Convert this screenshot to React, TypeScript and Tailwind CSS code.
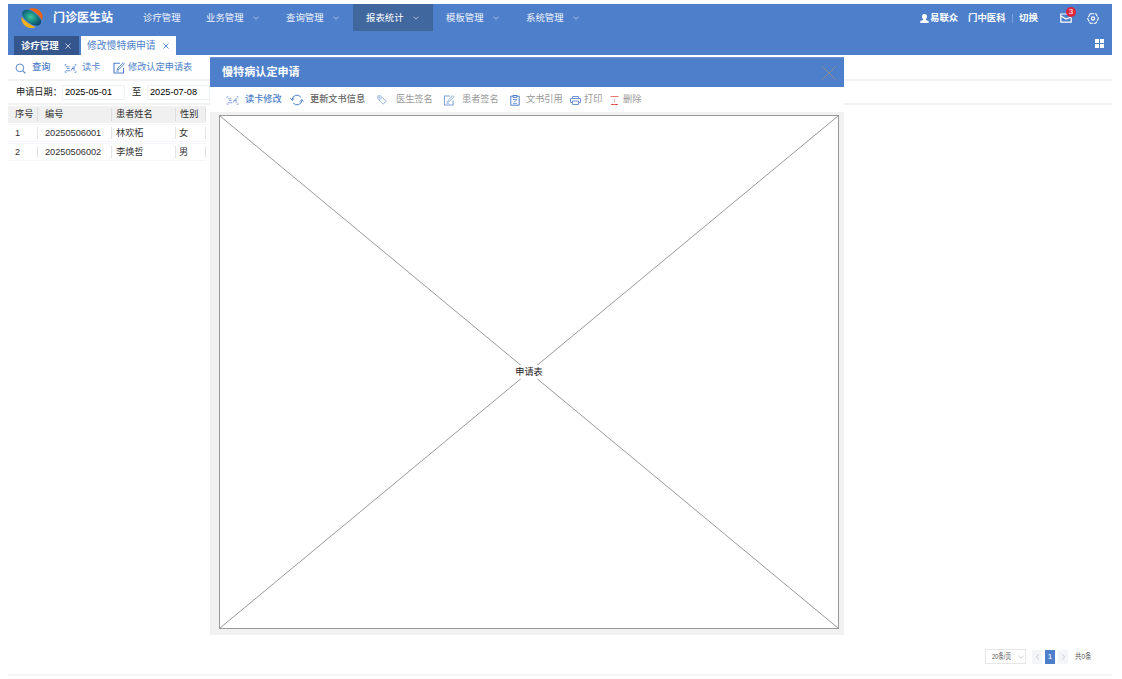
import type { ReactNode } from "react";

const menus = [
  { label: "业务管理" },
  { label: "查询管理" },
  { label: "报表统计", active: true },
  { label: "模板管理" },
  { label: "系统管理" },
];

const patients = [
  { no: "1", code: "20250506001", name: "林欢柘", sex: "女" },
  { no: "2", code: "20250506002", name: "李焕哲", sex: "男" },
];

interface IconProps {
  className?: string;
  children: ReactNode;
  viewBox?: string;
}

const Icon = ({ className = "", children, viewBox = "0 0 12 12" }: IconProps) => (
  <svg
    viewBox={viewBox}
    className={`shrink-0 ${className}`}
    fill="none"
    stroke="currentColor"
    strokeWidth="1"
  >
    {children}
  </svg>
);

const Chevron = ({ className = "" }: { className?: string }) => (
  <Icon className={className} viewBox="0 0 6 4">
    <path d="M0.5 0.7 3 3.2 5.5 0.7" strokeWidth="0.8" />
  </Icon>
);

const Cross = ({ className = "" }: { className?: string }) => (
  <Icon className={className} viewBox="0 0 6 6">
    <path d="M0.5 0.5 5.5 5.5M5.5 0.5 0.5 5.5" strokeWidth="0.9" />
  </Icon>
);

const CardIcon = ({ className = "" }: { className?: string }) => (
  <Icon className={className} viewBox="0 0 13 10">
    <path d="M0.5 2.5V0.5H2M11 0.5h1.5v2M0.5 7.5v2H2M11 9.5h1.5v-2" strokeWidth="0.7" />
    <path d="M1.5 3h4M2.5 5h3M1.5 7.5h4.5M7 7.5l3-4.5M8 5h2.5M10.5 2.5v5" strokeWidth="0.9" />
  </Icon>
);

const EditIcon = ({ className = "" }: { className?: string }) => (
  <Icon className={className}>
    <path d="M7 1.2H1v9.8h9.5V6" strokeWidth="1.1" />
    <path d="M4.3 7.8 5 5.8 10.2 0.7l1.2 1.2L6.2 7.1z" strokeWidth="0.9" />
    <path d="M3 9h3" strokeWidth="0.8" />
  </Icon>
);

const Logo = () => (
  <svg viewBox="0 0 22 20" className="h-[20px] w-[22px] shrink-0">
    <defs>
      <radialGradient id="globe" cx="0.45" cy="0.45" r="0.6">
        <stop offset="0" stopColor="#3fc79c" />
        <stop offset="0.55" stopColor="#168184" />
        <stop offset="1" stopColor="#0c4d70" />
      </radialGradient>
    </defs>
    <path
      d="M1.5 4C4 0.5 9 1.5 14 5.5c4.5 3.5 7.5 7 5.5 10.5-2.5 3-7.5 1.5-12-2C3 10.5 0 7 1.5 4z"
      fill="url(#globe)"
    />
    <path d="M7.5 0.8C13-0.8 19 1 21 6c.8 2 .6 4.500 0 6C18 7 13 3 7.500.8z" fill="#ee6414" />
    <path d="M0.5 9c-.8 5 3 10 8.500 11 2 .2 4 0 5.500-1C9 17 4.500 13.500.5 9z" fill="#f4b01c" />
  </svg>
);

const Header = () => (
  <header className="h-[51px] shrink-0 bg-[#4e7fcb] text-white">
    <div className="flex h-[27px] items-center text-[9.4px] *:pt-px">
      <div className="flex w-[122px] items-center pl-[13px]">
        <Logo />
        <h1 className="ml-[10px] text-[12px] font-bold">门诊医生站</h1>
      </div>
      <div className="w-[63px] pl-[13px] text-[#eef3fb]">诊疗管理</div>
      {menus.map((menu) => (
        <div
          key={menu.label}
          className={`flex h-full w-20 items-center pl-[13px] ${
            menu.active ? "bg-[#41679f] text-white" : "text-[#eef3fb]"
          }`}
        >
          <span className="w-[47px]">{menu.label}</span>
          <Chevron className="h-[4px] w-[6px] text-[#c9d8f0]" />
        </div>
      ))}
      <div className="ml-auto flex h-full items-center pr-[13px] font-bold">
        <svg viewBox="0 0 9 9" className="mr-[1px] h-[9px] w-[9px]" fill="currentColor">
          <path d="M4.5 0a2.4 2.6 0 0 1 1.4 4.8V6L8.7 7v2H.3V7l2.8-1V4.8A2.4 2.6 0 0 1 4.5 0z" />
        </svg>
        <span className="w-[38px]">易联众</span>
        <span className="w-[44px]">门中医科</span>
        <span className="mr-[6px] h-[9px] w-px bg-[#7b9fd8]" />
        <span className="w-[41px]">切换</span>
        <span className="relative mr-[15px]">
          <Icon className="h-[10px] w-[12px]" viewBox="0 0 12 10">
            <path d="M7 1H0.8v8.2h10.4V4.5M1 3l5 3 5-2" strokeWidth="1.2" />
          </Icon>
          <span className="absolute -top-[6px] left-[6px] flex h-[10px] w-[10px] items-center justify-center rounded-full bg-[#e0233c] text-[8px] font-normal">
            3
          </span>
        </span>
        <Icon className="h-[11px] w-[12px]" viewBox="0 0 12 11">
          <path d="M3.2 0.8h5.6l2.6 4.7-2.6 4.7H3.2L0.6 5.5z" strokeWidth="1.1" strokeDasharray="4 0.8" />
          <circle cx="6" cy="5.5" r="1.6" strokeWidth="1.2" />
        </Icon>
      </div>
    </div>
    <div className="flex h-6 items-end pl-[6px]">
      <div className="flex h-[19px] w-[65px] items-center bg-[#34568d] pt-px pl-[7px] text-[9.4px] font-bold">
        <span className="w-[44px]">诊疗管理</span>
        <Cross className="h-[6px] w-[6px] text-[#c3cfe2]" />
      </div>
      <div className="ml-[2px] flex h-[19px] w-[95px] items-center bg-white pt-px pl-[6px] text-[9.8px] text-[#4e7fcb]">
        <span className="w-[76px] whitespace-nowrap">修改慢特病申请</span>
        <Cross className="h-[6px] w-[6px]" />
      </div>
      <div className="mr-2 mb-[7px] ml-auto grid grid-cols-2 gap-px">
        <i className="h-[4px] w-[4px] bg-white" />
        <i className="h-[4px] w-[4px] bg-white" />
        <i className="h-[4px] w-[4px] bg-white" />
        <i className="h-[4px] w-[4px] bg-white" />
      </div>
    </div>
  </header>
);

const Toolbar = () => (
  <div className="flex h-[26px] shrink-0 items-center border-b-2 border-[#f2f2f2] pt-[2px] pl-[7px] text-[9.2px] text-[#4e7fcb]">
    <Icon className="h-[11px] w-[11px]">
      <circle cx="5.3" cy="5.3" r="4.2" />
      <path d="m8.4 8.4 3 3" strokeWidth="1.1" />
    </Icon>
    <span className="ml-[6px] w-[32px] font-medium">查询</span>
    <CardIcon className="h-[9px] w-[13px]" />
    <span className="ml-[5px] w-[31px]">读卡</span>
    <EditIcon className="h-[12px] w-[12px]" />
    <span className="ml-[3px]">修改认定申请表</span>
  </div>
);

const Filter = () => (
  <div className="flex h-[24px] shrink-0 items-center border-b-2 border-[#f2f2f2] pl-2 text-[9.2px] text-[#222]">
    <span className="w-[46px] pt-px">申请日期：</span>
    <span className="flex h-[15px] w-[63px] items-center border border-[#edf2fa] pt-px pl-[2px] text-[9.2px] text-black">
      2025-05-01
    </span>
    <span className="w-[22px] pt-px pl-[7px]">至</span>
    <span className="flex h-[15px] w-[63px] items-center border border-[#edf2fa] pt-px pl-[2px] text-[9.2px] text-black">
      2025-07-08
    </span>
  </div>
);

const PatientTable = () => (
  <div className="mt-px w-[198px] text-[9.2px] text-[#333]">
    <div className="flex h-[17px] items-center bg-[#f0f0f0]">
      <span className="w-[30px] border-r border-[#dedede] pl-[7px]">序号</span>
      <span className="w-[74px] border-r border-[#dedede] pl-[7px]">编号</span>
      <span className="w-[64px] border-r border-[#dedede] pl-1">患者姓名</span>
      <span className="w-[30px] border-r border-[#dedede] pl-1">性别</span>
    </div>
    {patients.map((p) => (
      <div
        key={p.code}
        className="mt-px flex h-[18px] items-center border-y border-[#f4f6f9] leading-[12px]"
      >
        <span className="w-[30px] border-r border-[#e3e3e3] pl-[7px]">{p.no}</span>
        <span className="w-[74px] border-r border-[#e3e3e3] pl-[7px]">{p.code}</span>
        <span className="w-[64px] border-r border-[#e3e3e3] pl-1">{p.name}</span>
        <span className="w-[30px] border-r border-[#e3e3e3] pl-[3px]">{p.sex}</span>
      </div>
    ))}
  </div>
);

const ApplyDialog = () => (
  <section className="absolute top-[53px] left-[202px] flex h-[578px] w-[634px] flex-col bg-[#f1f1f1]">
    <div className="flex h-[30px] shrink-0 items-center justify-between border-t border-[#6a92d2] bg-[#4e7fcb] pr-2 pl-3 text-[11.1px] font-bold text-white">
      慢特病认定申请
      <Icon className="h-[14px] w-[14px] text-[#8d8f95]" viewBox="0 0 14 14">
        <path d="M0.5 0.5 13.5 13.5M13.5 0.5 0.5 13.5" />
      </Icon>
    </div>
    <div className="flex h-[25px] shrink-0 items-center bg-white pt-px pl-4 text-[9.2px] whitespace-nowrap text-[#999]">
      <CardIcon className="h-[9px] w-[13px] text-[#7396cf]" />
      <span className="ml-[6px] w-[45px] font-medium text-[#4e7fcb]">读卡修改</span>
      <Icon className="h-[12px] w-[14px] text-[#4e7fcb]" viewBox="0 0 14 12">
        <path d="M2.2 5.8A4.800 4.800 0 0 1 10.800 3M11.800 6.200A4.800 4.800 0 0 1 3.200 9" />
        <path d="M0.300 4.300 2.200 6.300 4.200 4.500M9.800 7.500l2-2 1.900 2" />
      </Icon>
      <span className="ml-[6px] w-[67px] font-medium text-[#666]">更新文书信息</span>
      <Icon className="h-[10px] w-[10px] text-[#86a6dc]">
        <path d="M1 1h3l7 6.5L7.5 11 1 4.5zM6 3 2.5 6" />
        <circle cx="3" cy="3" r="0.6" />
      </Icon>
      <span className="ml-[9px] w-[47px]">医生签名</span>
      <EditIcon className="h-[11px] w-[12px] text-[#7c9fd8]" />
      <span className="ml-[7px] w-[48px]">患者签名</span>
      <Icon className="h-[11px] w-[10px] text-[#4e7fcb]" viewBox="0 0 10 11">
        <path d="M3 1.2H0.8v9h8.4v-9H7M3 0.5h4v1.8H3z" />
        <path d="M3 4.5h4L4.5 7M3 8.3h4" strokeWidth="0.8" />
      </Icon>
      <span className="ml-[6px] w-[44px]">文书引用</span>
      <Icon className="h-[9px] w-[11px] text-[#6d94d4]" viewBox="0 0 11 9">
        <path d="M2.5 2.5v-2h6v2M2.5 6.5h-2v-4h10v4h-2M2.5 5h6v3.5h-6z" />
      </Icon>
      <span className="ml-[3px] w-[26px]">打印</span>
      <Icon className="h-[9px] w-[9px] text-[#ec7b6d]" viewBox="0 0 9 9">
        <path d="M0.5 0.5h8M1.500 8.5h6" />
        <path d="M4.5 3v4" strokeWidth="0.5" />
        <path d="M1.500 8.5h2M5.500 8.5h2" stroke="#d63427" />
      </Icon>
      <span className="ml-[4px]">删除</span>
    </div>
    <div className="mt-[3px] ml-[9px] grid h-[514px] w-[620px] place-items-center border border-[#999] bg-white">
      <svg
        viewBox="0 0 618 512"
        className="col-start-1 row-start-1 h-[512px] w-[618px]"
        stroke="#999"
        strokeWidth="1"
      >
        <path d="M0 0 618 512M618 0 0 512" />
      </svg>
      <span className="z-10 col-start-1 row-start-1 bg-white px-px text-[9.2px] leading-[14px] text-[#222]">
        申请表
      </span>
    </div>
  </section>
);

const Pager = () => (
  <div className="mt-auto mr-[21px] mb-[10px] ml-auto flex h-[15px] items-center text-[8px] text-[#555]">
    <div className="flex h-[15px] w-[41px] items-center border border-[#e6e6e6] pl-[6px]">
      <span className="w-[26px] origin-left scale-x-[0.7] whitespace-nowrap">20条/页</span>
      <Chevron className="h-[4px] w-[6px] text-[#c4c4c4]" />
    </div>
    <span className="ml-[6px] flex h-[14px] w-[10px] items-center justify-center bg-[#f4f5f9] text-[#bbb]">
      <Icon className="h-[6px] w-[3px]" viewBox="0 0 3 6">
        <path d="M2.5 0.5 0.5 3l2 2.5" strokeWidth="0.7" />
      </Icon>
    </span>
    <span className="ml-[3px] flex h-[14px] w-[10px] items-center justify-center bg-[#4e7fcb] text-white">
      1
    </span>
    <span className="ml-[3px] flex h-[14px] w-[10px] items-center justify-center bg-[#f4f5f9] text-[#bbb]">
      <Icon className="h-[6px] w-[3px]" viewBox="0 0 3 6">
        <path d="M0.5 0.5 2.5 3l-2 2.5" strokeWidth="0.7" />
      </Icon>
    </span>
    <span className="ml-[7px] w-[16px] origin-left scale-x-[0.8] whitespace-nowrap">共0条</span>
  </div>
);

const App = () => {
  return (
    <div className="h-[679px] bg-white pt-1 pl-2 font-['Liberation_Sans','Noto_Sans_CJK_SC',sans-serif]">
      <main className="relative flex h-[672px] w-[1104px] flex-col border-b-2 border-[#f4f4f4]">
        <Header />
        <Toolbar />
        <Filter />
        <PatientTable />
        <Pager />
        <ApplyDialog />
      </main>
    </div>
  );
};

export default App;
